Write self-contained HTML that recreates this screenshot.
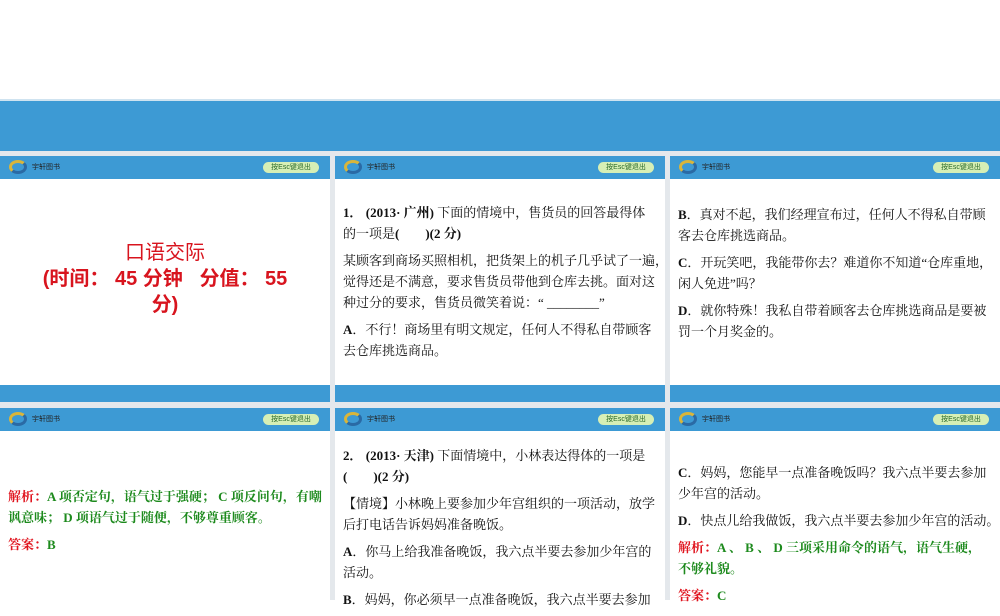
<!DOCTYPE html>
<html><head><meta charset="utf-8"><style>
*{margin:0;padding:0;box-sizing:border-box}
body{width:1000px;height:600px;overflow:hidden;background:#fff;position:relative;font-family:"Liberation Serif","Noto Serif CJK SC",serif;font-size:13px;color:#111}
.a{position:absolute}
.band{left:0;top:99px;width:1000px;height:52px;background:#3d9ad4;border-top:2px solid #cfe3f0}
.gap{background:#e4e8ec}
.hdr{position:absolute;height:23px;background:#3d9ad4}
.logo{position:absolute;left:9px;top:4px;width:18px;height:14px;border-radius:50%;border:3px solid #d9b53a;border-right-color:#2a6aa5;border-bottom-color:#2a6aa5}
.lt{position:absolute;left:32px;top:6px;font-size:7px;color:#222;font-family:"Noto Sans CJK SC",sans-serif}
.esc{position:absolute;right:11px;top:6px;width:56px;height:11px;border-radius:6px;background:#d7efb5;font-size:7px;line-height:11px;text-align:center;color:#2a6a2a;font-family:"Liberation Sans","Noto Sans CJK SC",sans-serif}
.ft{position:absolute;height:17px;background:#3d9ad4}
.t{position:absolute;line-height:21px;white-space:nowrap}
.t p{margin-bottom:6px}
b{font-weight:bold}
.g{color:#1d8a1d;font-weight:bold}
.r{color:#e0141e;font-weight:bold}
</style></head><body>
<div class="a band"></div>
<div class="a gap" style="left:0;top:151px;width:1000px;height:5px"></div>
<div class="a gap" style="left:330px;top:151px;width:5px;height:449px"></div>
<div class="a gap" style="left:665px;top:151px;width:5px;height:449px"></div>
<div class="a gap" style="left:0;top:402px;width:1000px;height:6px"></div>

<div class="hdr" style="left:0;top:156px;width:330px"><div class="logo"></div><div class="lt">宇轩图书</div><div class="esc">按Esc键退出</div></div>
<div class="hdr" style="left:335px;top:156px;width:330px"><div class="logo"></div><div class="lt">宇轩图书</div><div class="esc">按Esc键退出</div></div>
<div class="hdr" style="left:670px;top:156px;width:330px"><div class="logo"></div><div class="lt">宇轩图书</div><div class="esc">按Esc键退出</div></div>
<div class="hdr" style="left:0;top:408px;width:330px"><div class="logo"></div><div class="lt">宇轩图书</div><div class="esc">按Esc键退出</div></div>
<div class="hdr" style="left:335px;top:408px;width:330px"><div class="logo"></div><div class="lt">宇轩图书</div><div class="esc">按Esc键退出</div></div>
<div class="hdr" style="left:670px;top:408px;width:330px"><div class="logo"></div><div class="lt">宇轩图书</div><div class="esc">按Esc键退出</div></div>

<div class="ft" style="left:0;top:385px;width:330px"></div>
<div class="ft" style="left:335px;top:385px;width:330px"></div>
<div class="ft" style="left:670px;top:385px;width:330px"></div>

<div class="a" style="left:0;top:240px;width:330px;text-align:center;color:#d8141e;font-family:'Liberation Sans','Noto Sans CJK SC',sans-serif;font-size:20px;line-height:26px;font-weight:bold">
<span style="font-weight:normal">口语交际</span><br>(时间： 45 分钟 &nbsp;&nbsp;分值： 55<br>分)</div>

<div class="t" style="left:343px;top:202px">
<p><b>1． (2013· 广州)</b> 下面的情境中，售货员的回答最得体<br>的一项是<b>(　　)(2 分)</b></p>
<p>某顾客到商场买照相机，把货架上的机子几乎试了一遍，<br>觉得还是不满意，要求售货员带他到仓库去挑。面对这<br>种过分的要求，售货员微笑着说：“ ________”</p>
<p><b>A</b>．不行！商场里有明文规定，任何人不得私自带顾客<br>去仓库挑选商品。</p>
</div>

<div class="t" style="left:678px;top:204px">
<p><b>B</b>．真对不起，我们经理宣布过，任何人不得私自带顾<br>客去仓库挑选商品。</p>
<p><b>C</b>．开玩笑吧，我能带你去？难道你不知道“仓库重地，<br>闲人免进”吗？</p>
<p><b>D</b>．就你特殊！我私自带着顾客去仓库挑选商品是要被<br>罚一个月奖金的。</p>
</div>

<div class="t" style="left:8px;top:486px">
<p><span class="r">解析：</span><span class="g">A 项否定句，语气过于强硬； C 项反问句，有嘲<br>讽意味； D 项语气过于随便，不够尊重顾客。</span></p>
<p><span class="r">答案：</span><span class="g">B</span></p>
</div>

<div class="t" style="left:343px;top:445px">
<p><b>2． (2013· 天津)</b> 下面情境中，小林表达得体的一项是<br><b>(　　)(2 分)</b></p>
<p>【情境】小林晚上要参加少年宫组织的一项活动，放学<br>后打电话告诉妈妈准备晚饭。</p>
<p><b>A</b>．你马上给我准备晚饭，我六点半要去参加少年宫的<br>活动。</p>
<p><b>B</b>．妈妈，你必须早一点准备晚饭，我六点半要去参加</p>
</div>

<div class="t" style="left:678px;top:462px">
<p><b>C</b>．妈妈，您能早一点准备晚饭吗？我六点半要去参加<br>少年宫的活动。</p>
<p><b>D</b>．快点儿给我做饭，我六点半要去参加少年宫的活动。</p>
<p><span class="r">解析：</span><span class="g">A 、 B 、 D 三项采用命令的语气，语气生硬，<br>不够礼貌。</span></p>
<p><span class="r">答案：</span><span class="g">C</span></p>
</div>
</body></html>
